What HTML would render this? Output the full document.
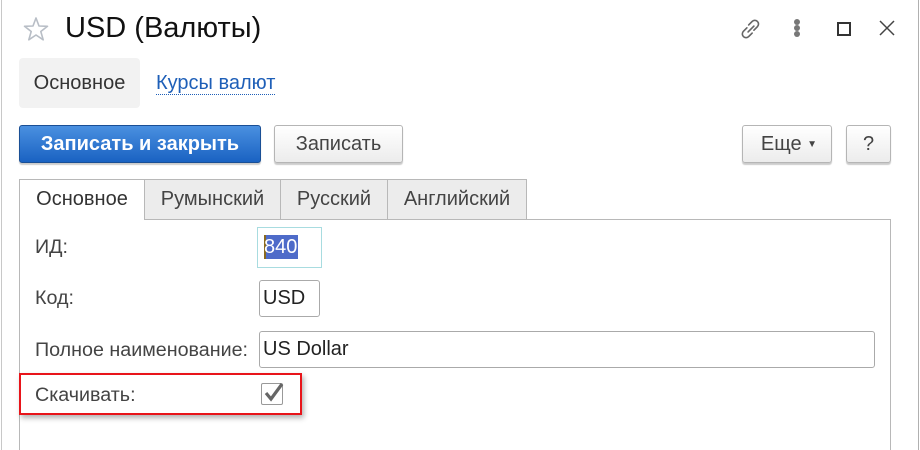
<!DOCTYPE html>
<html style="height:450px;overflow:hidden"><head><meta charset="utf-8"><style>
body{margin:0;width:920px;height:450px;background:#fff;font-family:"Liberation Sans",Arial,sans-serif;position:relative;overflow:hidden;color:#333}
.a{position:absolute}
.btn{position:absolute;box-sizing:border-box;border:1px solid #b5b5b5;border-radius:3px;background:linear-gradient(#fff,#ececec);box-shadow:0 2px 1px rgba(0,0,0,.2);font-size:20px;color:#444;text-align:center}
.tab{position:absolute;top:179px;height:40px;box-sizing:border-box;border:1px solid #b8b8b8;border-bottom:none;background:#ececec;font-size:20px;color:#444;text-align:center;line-height:38px}
.lbl{position:absolute;left:35px;font-size:19.7px;color:#444}
.inp{position:absolute;box-sizing:border-box;border:1px solid #aaa;border-radius:3px;background:#fff;font-size:20px;color:#222;padding-left:3px}
</style></head><body>
<div class="a" style="left:1px;top:0;width:1px;height:450px;background:#c8c8c8"></div>
<div class="a" style="left:918px;top:0;width:1px;height:450px;background:#b0b0b0"></div>
<svg class="a" style="left:23px;top:16px" width="26" height="26" viewBox="0 0 26 26"><path d="M13 2 L16 10 L24.5 10.3 L17.8 15.5 L20.2 23.8 L13 19 L5.8 23.8 L8.2 15.5 L1.5 10.3 L10 10 Z" fill="none" stroke="#b8bec6" stroke-width="1.6" stroke-linejoin="round"/></svg>
<div class="a" style="left:65px;top:12px;font-size:29px;color:#111">USD (Валюты)</div>
<svg class="a" style="left:737px;top:15px" width="28" height="28" viewBox="0 0 24 24" fill="none" stroke="#666" stroke-width="1.4" stroke-linecap="round"><path d="M10 8.5 L13 5.5 a3 3 0 0 1 4.5 4.5 L14.5 13"/><path d="M13 15.5 L10 18.5 a3 3 0 0 1 -4.5 -4.5 L8.5 11"/><path d="M9.5 14.5 L14.5 9.5"/></svg>
<div class="a" style="left:794px;top:19px;width:6px;height:6px;border-radius:50%;background:#777;box-shadow:0 6px 0 #777,0 12px 0 #777"></div>
<div class="a" style="left:837px;top:22px;width:10px;height:10px;border:2px solid #333"></div>
<svg class="a" style="left:879px;top:20px" width="16" height="16" viewBox="0 0 16 16" stroke="#444" stroke-width="1.5"><path d="M1 1L15 15M15 1L1 15"/></svg>
<div class="a" style="left:19px;top:58px;width:121px;height:50px;background:#f2f2f2;border-radius:4px;font-size:20px;color:#333;text-align:center;line-height:50px">Основное</div>
<div class="a" style="left:156px;top:72px;font-size:20px;color:#1e5fb8;border-bottom:1px dotted #1e5fb8;line-height:22px">Курсы валют</div>
<div class="btn" style="left:19px;top:125px;width:242px;height:38px;background:linear-gradient(#4a90e0,#1a62c2);border-color:#1a4f95;color:#fff;font-weight:bold;line-height:36px">Записать и закрыть</div>
<div class="btn" style="left:274px;top:125px;width:129px;height:38px;line-height:36px">Записать</div>
<div class="btn" style="left:742px;top:125px;width:90px;height:38px;line-height:36px;padding-left:4px">Еще <span style="font-size:10px;position:relative;top:-3px">▼</span></div>
<div class="btn" style="left:846px;top:125px;width:45px;height:38px;line-height:36px">?</div>
<div class="tab" style="left:19px;width:126px;background:#fff;color:#333;height:41px;z-index:2">Основное</div>
<div class="tab" style="left:144px;width:137px">Румынский</div>
<div class="tab" style="left:280px;width:108px">Русский</div>
<div class="tab" style="left:387px;width:140px">Английский</div>
<div class="a" style="left:19px;top:219px;width:870px;height:231px;border:1px solid #b8b8b8;border-bottom:none"></div>
<div class="lbl" style="top:236px">ИД:</div>
<div class="a" style="left:257px;top:227px;width:65px;height:41px;box-sizing:border-box;border:1px solid #a8dce0"></div>
<div class="a" style="left:264px;top:235px;width:34px;height:24px;background:#4e6bc9"></div>
<div class="a" style="left:264px;top:235px;width:2px;height:24px;background:#8a6a20"></div>
<div class="a" style="left:264px;top:235px;font-size:20px;color:#fff;line-height:24px">840</div>
<div class="lbl" style="top:287px">Код:</div>
<div class="inp" style="left:259px;top:280px;width:61px;height:37px;line-height:35px">USD</div>
<div class="lbl" style="top:339px">Полное наименование:</div>
<div class="inp" style="left:259px;top:331px;width:616px;height:37px;line-height:35px">US Dollar</div>
<div class="a" style="left:19px;top:373px;width:283px;height:42px;box-sizing:border-box;border:2px solid #e8141a;box-shadow:2px 3px 5px rgba(0,0,0,.3)"></div>
<div class="lbl" style="top:384px">Скачивать:</div>
<div class="a" style="left:261px;top:383px;width:22px;height:22px;box-sizing:border-box;border:1px solid #999;border-radius:2px;background:#fff"></div>
<svg class="a" style="left:262px;top:380px" width="24" height="24" viewBox="0 0 24 24"><path d="M4 13 L9 19 L20 4" fill="none" stroke="#666" stroke-width="3.2"/></svg>
</body></html>
